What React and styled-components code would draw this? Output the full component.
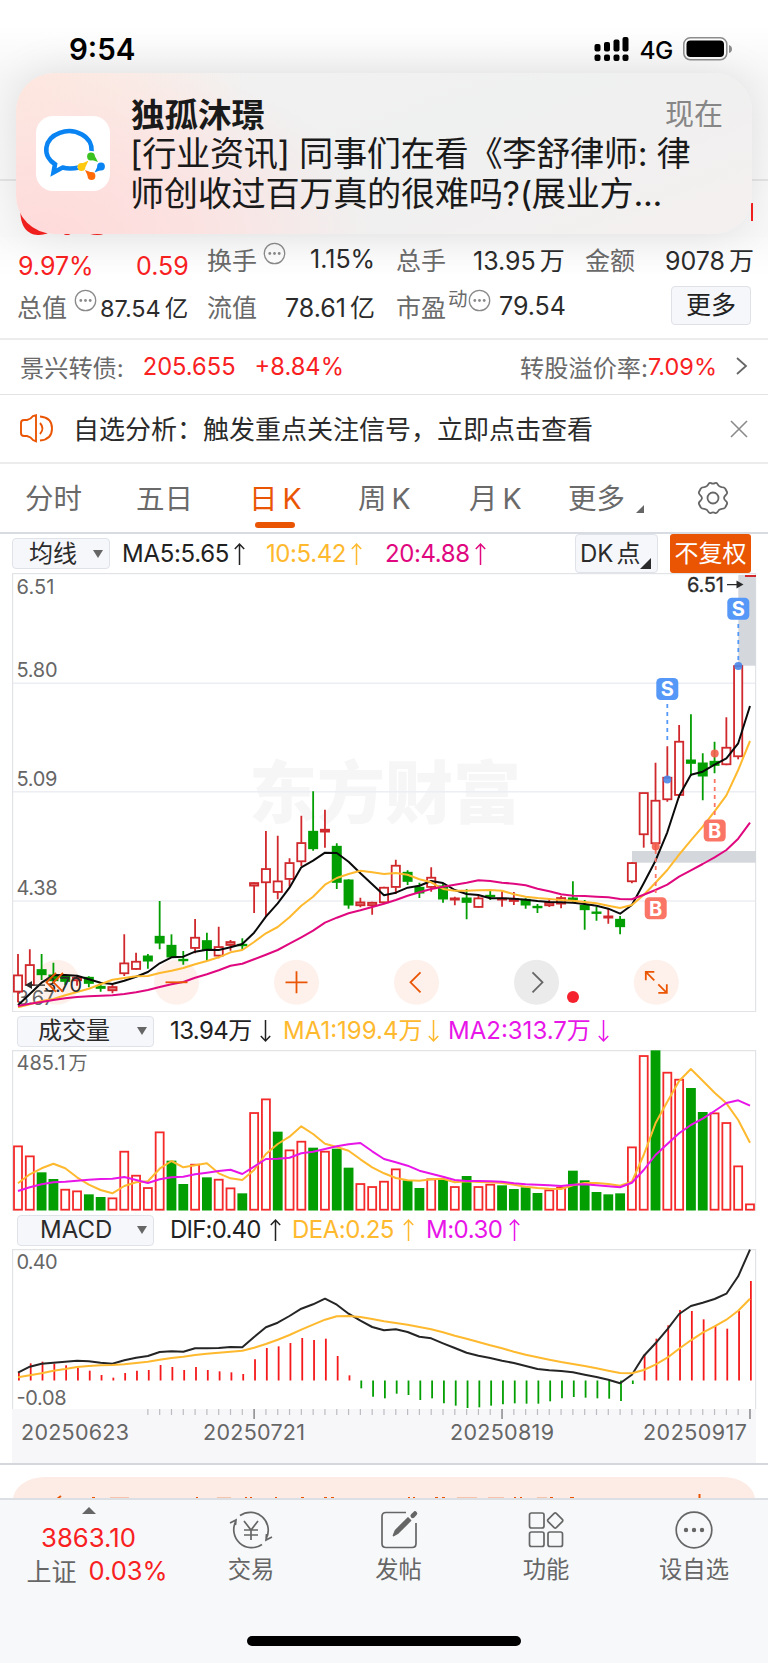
import React from "react";
import styled, { createGlobalStyle } from "styled-components";

const Global = createGlobalStyle`
  * { box-sizing: border-box; }
  body { margin: 0; background: #fff; }
`;

const FONT = `Inter, "Noto Sans CJK SC", sans-serif`;
const RED = "#f8211f";
const GREEN = "#029e02";
const CANDLE = "#d0282c";
const ORANGE = "#ea5504";
const YELLOW = "#ffb92e";
const PINK = "#e0087f";
const PURPLE = "#e815e8";

const Screen = styled.div`
  position: relative;
  width: 768px;
  height: 1663px;
  overflow: hidden;
  background: #fff;
  font-family: ${FONT};
  color: #2b2b2b;
  display: flex;
  flex-direction: column;
`;

/* ---------- status bar and header ---------- */
const Header = styled.header`
  height: 237px;
  flex: none;
  display: flex;
  flex-direction: column;
  background: linear-gradient(#fff 0, #fff 24px, #fafafa 55px, #f7f7f7 80px, #fafafa 200px, #f8f8f8 237px);
`;
const StatusBar = styled.div`
  height: 73px;
  padding: 25px 36px 0 69px;
  display: flex;
  align-items: center;
  color: #000;
`;
const Clock = styled.span`
  flex: 1;
  font-size: 29.5px;
  font-weight: 600;
  line-height: 47px;
`;
const Network = styled.span`
  font-size: 24.5px;
  font-weight: 500;
  margin: 2px 10px 0 9px;
  letter-spacing: -0.4px;
`;
const TitleArea = styled.div`
  height: 108px;
  border-bottom: 2px solid #e6e6e7;
`;
const PriceStrip = styled.div`
  height: 56px;
  padding-left: 17px;
  padding-right: 15px;
  display: flex;
  justify-content: space-between;
  overflow: hidden;
`;
const BigPrice = styled.span`
  color: ${RED};
  font-size: 68px;
  line-height: 56px;
  font-weight: 600;
  letter-spacing: -2px;
`;
const PriceMark = styled.span`
  width: 2px;
  height: 18px;
  margin-top: 22px;
  background: ${RED};
`;

const Notification = styled.section`
  position: absolute;
  left: 16px;
  top: 73px;
  width: 736px;
  height: 161px;
  border-radius: 38px;
  padding: 0 29px 0 20px;
  display: flex;
  align-items: center;
  background:
    radial-gradient(ellipse 330px 190px at 30px 165px, #ffdada 0, rgba(255, 222, 220, 0.75) 45%, rgba(255, 230, 228, 0) 100%),
    radial-gradient(ellipse 230px 150px at 0 10px, #fde9df 0, rgba(252, 235, 228, 0.7) 50%, rgba(250, 240, 236, 0) 100%),
    linear-gradient(160deg, #f3f2f1 0%, #eff0f0 50%, #f4f0ef 100%);
  box-shadow: 0 0 44px rgba(0, 0, 0, 0.11);
`;
const AppIcon = styled.div`
  width: 74px;
  height: 75px;
  flex: none;
  margin-top: -1px;
  border-radius: 17px;
  background: #fff;
`;
const Message = styled.div`
  flex: 1;
  margin-left: 20px;
  color: #1a1a1a;
`;
const MessageHead = styled.div`
  display: flex;
  justify-content: space-between;
  align-items: center;
  height: 40px;
  padding-bottom: 3px;
`;
const Sender = styled.span`
  font-size: 33.5px;
  font-weight: 700;
  padding-left: 1px;
`;
const When = styled.span`
  font-size: 29px;
  color: #878686;
`;
const MessageLine = styled.div`
  font-size: 34.2px;
  line-height: 40px;
  height: 40px;
  white-space: nowrap;
  letter-spacing: -0.32px;
`;

/* ---------- quote ---------- */
const Quote = styled.section`
  height: 103px;
  flex: none;
  border-bottom: 2px solid #ececed;
  background: linear-gradient(#f9f9f9, #fff 40px);
`;
const QuoteRow = styled.div`
  display: grid;
  grid-template-columns: ${(p) => p.$cols};
  padding-left: 18px;
  height: ${(p) => p.$h}px;
  padding-bottom: ${(p) => p.$pb}px;
  align-items: center;
  white-space: nowrap;
`;
const Label = styled.span`
  display: flex;
  align-items: center;
  gap: ${(p) => p.$gap || 0}px;
  font-size: 25px;
  color: #6a6a6a;
  margin-left: -1px;
`;
const Sup = styled.span`
  font-size: 19.5px;
  margin: -16px -1px 0 1px;
`;
const Num = styled.span`
  font-size: ${(p) => p.$size || 25}px;
  color: ${(p) => p.$color || "#2b2b2b"};
  margin-top: ${(p) => p.$dy || 0}px;
`;
const Unit = styled.span`
  margin-left: ${(p) => p.$gap || 4}px;
`;
const MoreButton = styled.button`
  width: 80px;
  height: 39px;
  padding: 0;
  border: 1.5px solid #dfe1e7;
  border-radius: 4px;
  background: #f6f7fa;
  font: 25px ${FONT};
  line-height: 33px;
  color: #222;
`;

/* ---------- bond and notice ---------- */
const BondRow = styled.section`
  height: 55px;
  flex: none;
  padding: 0 20px 2px;
  display: flex;
  align-items: center;
  border-bottom: 1.5px solid #e2e4e8;
  white-space: nowrap;
  font-size: 24.2px;
  color: #6a6a6a;
`;
const Spacer = styled.span`
  flex: ${(p) => (p.$w ? "none" : 1)};
  width: ${(p) => p.$w || 0}px;
`;
const Notice = styled.section`
  height: 69px;
  flex: none;
  padding: 0 20px;
  display: flex;
  align-items: center;
  border-bottom: 2px solid #ececed;
  font-size: 26px;
`;
const NoticeText = styled.span`
  flex: 1;
  margin-left: 20px;
  padding-bottom: 3px;
`;

/* ---------- tabs ---------- */
const Tabs = styled.nav`
  height: 70px;
  flex: none;
  display: grid;
  grid-template-columns: 111px 113px 109px 111px 99px 128px 1fr;
  padding-left: 25px;
  border-bottom: 2px solid #d8dbe2;
`;
const Tab = styled.div`
  display: flex;
  flex-direction: column;
  width: max-content;
  align-items: center;
  font-size: 28.5px;
  line-height: 41px;
  padding-top: 14px;
  color: ${(p) => (p.$on ? ORANGE : "#6a6a6a")};
`;
const TabText = styled.span`
  display: flex;
  align-items: flex-end;
  gap: 5px;
`;
const TabLine = styled.i`
  width: 40px;
  height: 6px;
  border-radius: 3px;
  margin: 3px 0 0 0;
  background: ${ORANGE};
`;
const Gear = styled.svg`
  margin-top: 3px;
`;
const Corner = styled.i`
  border-left: ${(p) => p.$s}px solid transparent;
  border-bottom: ${(p) => p.$s}px solid ${(p) => p.$color};
  margin: ${(p) => p.$m};
`;

/* ---------- indicator bars ---------- */
const IndicatorBar = styled.div`
  height: ${(p) => p.$h}px;
  flex: none;
  padding: 0 17px 0 ${(p) => p.$pl}px;
  display: flex;
  align-items: center;
  white-space: nowrap;
`;
const Select = styled.button`
  width: ${(p) => p.$w}px;
  height: 31px;
  padding: 0 6px 0 ${(p) => p.$pl}px;
  display: flex;
  align-items: center;
  justify-content: space-between;
  border: 1.5px solid #dfe2e8;
  border-radius: 4px;
  background: #f6f7fa;
  font: 24px ${FONT};
  line-height: 28px;
  color: #2b2b2b;
`;
const Caret = styled.i`
  border: 5px solid transparent;
  border-top: 8px solid #666;
  border-bottom: 0;
`;
const Value = styled.span`
  display: flex;
  align-items: center;
  gap: ${(p) => p.$gap || 4}px;
  width: ${(p) => p.$w}px;
  font-size: 24px;
  line-height: 30px;
  color: ${(p) => p.$color || "#222"};
  letter-spacing: ${(p) => p.$ls || 0}px;
`;
const DKButton = styled.button`
  width: 83px;
  height: 39px;
  margin-right: 12px;
  padding: 0 5px 0 4px;
  display: flex;
  align-items: flex-end;
  border: 1.5px solid #dfe2e8;
  border-radius: 4px;
  background: #f6f7fa;
  font: 24px ${FONT};
  line-height: 36px;
  color: #2b2b2b;
  white-space: nowrap;
`;
const AdjustButton = styled.button`
  width: 81px;
  height: 39px;
  padding: 0;
  border: 0;
  border-radius: 3px;
  background: ${ORANGE};
  color: #fff;
  font: 24px ${FONT};
  line-height: 37px;
`;
const Chart = styled.svg`
  display: block;
  flex: none;
  margin-left: 12px;
  font-family: ${FONT};
`;

/* ---------- lower part ---------- */
const Promo = styled.section`
  height: 35px;
  flex: none;
  padding: 12px 13px 0;
  border-top: 2px solid #d5d7dc;
`;
const PromoCard = styled.div`
  height: 23px;
  border-radius: 32px 32px 0 0 / 23px 23px 0 0;
  background: #fdece5;
`;
const Footer = styled.footer`
  flex: 1;
  border-top: 2px solid #dcdfe3;
  background: #f6f8fa;
  display: flex;
  flex-direction: column;
  align-items: center;
`;
const FooterRow = styled.div`
  width: 768px;
  height: 136px;
  display: grid;
  grid-template-columns: 177px 148px 147px 148px 148px;
`;
const IndexCell = styled.div`
  display: flex;
  flex-direction: column;
  align-items: center;
  padding-top: 7px;
  white-space: nowrap;
`;
const UpMark = styled.i`
  border: 7px solid transparent;
  border-top: 0;
  border-bottom: 7px solid #666;
`;
const IndexLine = styled.div`
  display: flex;
  gap: 12px;
  align-items: center;
  height: 34px;
  margin-top: ${(p) => p.$mt}px;
  margin-left: ${(p) => p.$ml}px;
  font-size: 25px;
  color: #666;
`;
const Action = styled.div`
  display: flex;
  flex-direction: column;
  align-items: center;
  padding-top: 7px;
  font-size: 23.3px;
  line-height: 34px;
  color: #666;
`;
const HomeBar = styled.div`
  width: 274px;
  height: 10px;
  border-radius: 5px;
  background: #000;
`;

/* ---------- data: 63 trading days ---------- */
const X = (i) => 18 + i * 11.806;
const candles = `r 1152 1215 1266 1297|r 1138 1184 1246 1250|g 1152 1199 1214 1230|g 1178 1215 1232 1240|g 1215 1217 1234 1246|r 1217 1222 1232 1247|g 1219 1222 1240 1252|g 1240 1249 1255 1265|r 1245 1250 1262 1270|r 1093 1179 1211 1218|r 1148 1174 1198 1200|g 1152 1158 1173 1196|g 993 1099 1119 1138|g 1093 1126 1161 1161|g 1143 1168 1172 1184|r 1047 1102 1135 1150|g 1088 1112 1139 1172|r 1070 1130 1158 1165|r 1110 1115 1126 1142|g 1105 1123 1127 1140|r 937 938 948 1029|r 783 896 938 1040|r 797 933 967 988|r 865 878 928 950|r 737 818 875 888|g 664 784 836 842|r 719 778 786 833|g 820 829 937 957|g 928 930 1005 1016|r 983 996 1007 1012|r 995 997 1007 1034|r 950 952 998 1000|r 869 886 952 972|g 901 907 934 945|g 938 952 969 984|r 892 922 952 965|g 940 948 987 998|r 980 984 990 1006|g 957 984 997 1048|r 978 984 1012 1014|g 963 976 980 990|r 964 985 990 1010|r 966 986 994 1005|g 985 988 1005 1016|g 1002 1009 1013 1029|r 984 997 1007 1011|r 977 983 1002 1015|g 934 984 989 997|g 990 1006 1019 1079|g 1010 1026 1030 1052|r 1015 1038 1044 1061|g 1038 1048 1070 1093|r 876 878 935 940|r 668 668 794 833|r 578 691 821 840|r 529 622 689 695|r 465 514 676 684|g 433 570 580 618|g 550 579 618 691|g 515 574 586 610|r 442 532 584 586|r 287 287 560 568`
  .split("|")
  .map((s) => {
    const [c, ...v] = s.split(" ");
    return [c, ...v.map((n) => 570 + n / 3)];
  });
const ma5 = [1306,1272,1238,1216,1215,1217,1228,1238,1242,1232,1220,1206,1180,1162,1160,1145,1139,1140,1132,1122,1088,1040,1000,953,892,872,848,849,875,910,943,976,968,953,947,933,939,960,972,975,985,985,986,989,993,996,997,998,1002,1007,1016,1031,1005,940,872,787,678,614,605,584,565,520,408];
const ma10 = [1312,1303,1293,1287,1276,1266,1256,1243,1229,1224,1219,1218,1209,1202,1194,1183,1173,1162,1147,1140,1116,1090,1071,1042,1007,980,944,924,912,902,907,912,909,914,928,937,957,962,962,961,960,962,973,980,984,987,990,992,996,1000,1007,1014,1005,975,938,900,854,811,770,724,676,600,513];
const ma20 = [1308,1301,1296,1290,1285,1281,1279,1277,1276,1272,1267,1260,1251,1243,1236,1223,1213,1201,1187,1181,1168,1154,1140,1121,1102,1082,1058,1043,1030,1021,1011,1001,990,977,967,957,950,944,938,931,933,938,941,946,956,964,973,977,978,980,982,987,988,974,960,944,920,901,882,862,840,806,758];
const volumes = "r407 r437 g487 g507 r537 r542 g553 g561 r563 r423 r495 r532 r365 g452 g522 r462 g502 r507 r533 g550 r307 r266 g365 r419 r393 g413 r423 g416 g473 r520 r529 r513 r476 g511 g534 r506 g508 r529 g498 r529 r522 g526 g537 g532 g549 r539 r531 g482 g511 g546 g553 g550 r410 r136 g121 r186 r207 g234 g306 r308 r337 r467 r581".split(" ");
const vma1 = [520,493,475,461,475,502,524,540,550,528,517,514,476,453,472,466,460,490,505,510,480,432,402,380,349,372,401,411,422,448,472,490,504,511,512,508,506,517,514,516,517,519,524,530,534,536,537,526,519,519,522,527,515,435,340,275,213,177,212,248,280,330,398];
const vma2 = [543,532,523,517,515,512,509,507,506,501,510,519,508,502,500,493,488,483,479,492,470,447,446,443,430,425,417,409,403,399,424,447,457,467,482,491,500,510,513,513,514,515,520,523,524,526,528,524,523,526,529,532,518,480,435,402,370,345,326,303,279,271,287];
const macd = [488,460,455,461,466,474,482,495,503,489,482,480,465,471,480,471,480,484,487,492,448,414,409,399,384,390,386,438,496,535,560,565,551,555,570,565,580,587,594,592,587,583,580,581,581,574,565,561,563,565,566,573,522,432,386,346,300,303,328,348,356,302,213];
const dif = [488,470,461,458,455,452,454,458,461,451,443,438,426,424,425,415,415,414,411,412,381,352,338,318,296,283,266,284,311,332,351,361,358,366,380,385,400,414,428,437,444,452,459,468,477,481,483,487,494,501,509,520,494,438,400,358,312,288,278,267,251,199,119];
const dea = [502,496,490,482,477,471,468,466,465,463,459,455,449,444,440,435,431,428,425,422,413,402,389,375,359,344,329,319,318,321,327,334,339,344,351,358,367,377,386,396,406,415,425,434,442,449,456,462,468,475,482,489,490,480,464,443,416,391,368,349,329,302,266];

const Line = ({ data, top, color }) => (
  <polyline
    points={data.map((v, i) => `${X(i).toFixed(1)},${(top + v / 3).toFixed(1)}`).join(" ")}
    fill="none"
    stroke={color}
    strokeWidth="2"
    strokeLinejoin="round"
  />
);

const Arrow = ({ down }) => (
  <svg width="11" height="24" viewBox="0 0 11 24" fill="none" stroke="currentColor" strokeWidth="1.5">
    <path d={down ? "M5.5 1v21M.8 17l4.700 5 4.700-5" : "M5.500 23V2M.8 7l4.700-5 4.700 5"} />
  </svg>
);
const InfoIcon = styled.svg`
  margin-top: -11px;
`;
const Dots = () => (
  <InfoIcon width="23" height="23" viewBox="0 0 23 23">
    <circle cx="11.5" cy="11.5" r="10.2" fill="none" stroke="#8a8a8a" strokeWidth="1.3" />
    {[6.8, 11.5, 16.2].map((x) => <circle key={x} cx={x} cy="11.5" r="1.4" fill="#8a8a8a" />)}
  </InfoIcon>
);

const Marker = ({ x, y, t, from, to, dot }) => {
  const c = t === "S" ? "#5698f7" : "#fb7567";
  return (
    <g>
      <line x1={x} x2={x} y1={from} y2={to} stroke={c} strokeWidth="1.8" strokeDasharray="4 4" />
      <circle cx={x} cy={dot} r="4" fill={t === "S" ? "#4a86e8" : "#f4604e"} opacity=".9" />
      <rect x={x - 11} y={y - 11} width="22" height="22" rx="4.5" fill={c} />
      <text x={x} y={y + 7.2} textAnchor="middle" fontSize="20" fontWeight="700" fill="#fff">{t}</text>
    </g>
  );
};

const ChartButton = ({ x, gray, children }) => (
  <g transform={`translate(${x} 982.3)`} fill="none" stroke={gray ? "#666" : ORANGE} strokeWidth="1.8">
    {children}
  </g>
);

const PriceChart = () => (
  <Chart width="745" height="439" viewBox="12 573 745 439">
    <text x="249" y="818" fontSize="68" fontWeight="900" fill="#f6f6f7" textLength="272">东方财富</text>
    <g stroke="#eceef3" strokeWidth="1.4">
      <path d="M12 683.3H756M12 791.8H756M12 901H756" />
    </g>
    <rect x="12.6" y="573.6" width="743" height="438" fill="none" stroke="#e1e3e7" strokeWidth="1.2" />
    <rect x="738.3" y="575" width="17.5" height="90.7" fill="#d4d7dc" />
    <rect x="632" y="851" width="124" height="11.7" fill="#d4d7dc" />
    {[57, 176.5, 296.5, 416.5, 536.5, 656.3].map((x) => (
      <circle key={x} cx={x} cy="982.3" r="22.5" fill={x === 536.5 ? "#ebebec" : "#fef1eb"} />
    ))}
    <g fontSize="20" fill="#666">
      <text x="16.5" y="594" textLength="38">6.51</text>
      <text x="16.5" y="676.5" textLength="41">5.80</text>
      <text x="16.5" y="785.5" textLength="41">5.09</text>
      <text x="16.5" y="895" textLength="41">4.38</text>
      <text x="16.5" y="1005" textLength="38">3.67</text>
    </g>
    {candles.map(([c, hi, top, bot, lo], i) => {
      const col = c === "r" ? CANDLE : GREEN;
      return (
        <g key={i} stroke={col} strokeWidth="1.8">
          <path d={`M${X(i)} ${hi}V${top}M${X(i)} ${bot}V${lo}`} />
          <rect
            x={X(i) - 4.1}
            y={top + 0.4}
            width="8.2"
            height={Math.max(bot - top - 0.8, 0.6)}
            fill={c === "g" ? GREEN : bot - top < 5 ? "#e07f80" : "#fff"}
          />
        </g>
      );
    })}
    <path d="M745 576h11" stroke={CANDLE} strokeWidth="2" />
    <Line data={ma5} top={570} color="#0a0a0a" />
    <Line data={ma10} top={570} color={YELLOW} />
    <Line data={ma20} top={570} color={PINK} />
    <Marker t="S" x={738.3} y={608.7} from={624} to={662} dot={666} />
    <Marker t="S" x={667.3} y={689} from={704} to={742} dot={779.5} />
    <Marker t="B" x={714.7} y={830.5} from={779} to={816} dot={753.6} />
    <Marker t="B" x={655.7} y={908.3} from={850} to={893} dot={846.5} />
    <g fontSize="20" fill="#2b2b2b">
      <text x="687" y="592" textLength="37" stroke="#2b2b2b" strokeWidth=".3">6.51</text>
      <text x="44" y="992" textLength="38">3.70</text>
      <path d="M727 583.900h9.500v-3.500l7 4-7 4v-3.200h-9.500zM45 984.400H32v-3.400l-7 4 7 4v-3.200h13z" />
    </g>
    <ChartButton x={57}><path d="M-1-9.500-10.500 0-1 9.500M6-9.500-3.500 0 6 9.500" /></ChartButton>
    <ChartButton x={176.5}><path d="M-11 0H11" /></ChartButton>
    <ChartButton x={296.5}><path d="M-11 0H11M0-11V11" /></ChartButton>
    <ChartButton x={416.5}><path d="M4-10-6 0 4 10" /></ChartButton>
    <ChartButton x={536.5} gray><path d="M-4-10 6 0-4 10" /></ChartButton>
    <ChartButton x={656.3}>
      <path d="M-2-10.500h-8.500v8.500M-10-10-2-2M2 10.500h8.500V2M10 10 2 2" />
    </ChartButton>
    <circle cx="573" cy="997" r="6" fill="#f5222d" />
  </Chart>
);

const VolumeChart = () => (
  <Chart width="745" height="161" viewBox="12 1050 745 161">
    <path d="M12.600 1211V1050.600H755.600V1211" fill="none" stroke="#e1e3e7" strokeWidth="1.200" />
    <text x="16.500" y="1070" fontSize="20" fill="#666">485.1<tspan dx="3" fontSize="19">万</tspan></text>
    {volumes.map((s, i) => {
      const y = 1010 + Number(s.slice(1)) / 3;
      const red = s[0] === "r";
      return red ? (
        <rect key={i} x={X(i) - 4} y={y + 0.7} width="8" height={1209.7 - y - 0.7} fill="#fff" stroke="#f42a2a" strokeWidth="1.800" />
      ) : (
        <rect key={i} x={X(i) - 4.9} y={y} width="9.800" height={1210.5 - y} fill={GREEN} />
      );
    })}
    <Line data={vma1} top={1010} color={YELLOW} />
    <Line data={vma2} top={1010} color={PURPLE} />
  </Chart>
);

const MacdChart = () => (
  <Chart width="745" height="214" viewBox="12 1249 745 214">
    <path d="M12.600 1409V1249.600H755.600V1409" fill="none" stroke="#e1e3e7" strokeWidth="1.200" />
    <rect x="12" y="1409" width="744" height="54" fill="#f7f7fa" />
    {macd.map((v, i) => (
      <path key={i} d={`M${X(i) + 0.9} ${1210 + v / 3}V1380.500`} stroke={v > 511 ? GREEN : "#f5191b"} strokeWidth="1.800" />
    ))}
    <Line data={dif} top={1210} color="#252525" />
    <Line data={dea} top={1210} color={YELLOW} />
    {Array.from({ length: 52 }, (_, k) => k + 11).map((i) => {
      const big = i === 20 || i === 41 || i === 62;
      return <path key={i} d={`M${X(i)} 1409v${big ? 10 : 6}`} stroke={big ? "#8f8f93" : "#bdbdc1"} strokeWidth={big ? 1.6 : 1.2} />;
    })}
    <g fontSize="20" fill="#666">
      <text x="16.500" y="1268.500" textLength="41">0.40</text>
      <text x="16.500" y="1404.500" textLength="50">-0.08</text>
    </g>
    <g fontSize="21.500" fill="#666">
      <text x="21" y="1439.500" textLength="108">20250623</text>
      <text x="203" y="1439.500" textLength="102">20250721</text>
      <text x="450" y="1439.500" textLength="104">20250819</text>
      <text x="643" y="1439.500" textLength="104">20250917</text>
    </g>
  </Chart>
);

const icon = { width: 46, height: 46, viewBox: "0 0 46 46", fill: "none", stroke: "#666", strokeWidth: 1.7 };

export default function App() {
  return (
    <Screen>
      <Global />
      <Header>
        <StatusBar>
          <Clock>9:54</Clock>
          <svg width="36" height="26" viewBox="0 0 36 26">
            {[[0, 8], [9.5, 6], [19, 3.5], [28, 1]].map(([x, y]) => (
              <g key={x}>
                <rect x={x + 0.5} y={y} width="6" height={15.5 - y} rx="2" />
                <rect x={x + 0.5} y="18.500" width="6" height="6.500" rx="2" />
              </g>
            ))}
          </svg>
          <Network>4G</Network>
          <svg width="49" height="24" viewBox="0 0 49 24">
            <rect x=".8" y=".8" width="43" height="22" rx="6.500" fill="none" stroke="#8d8d8d" strokeWidth="1.500" />
            <rect x="3.500" y="3.500" width="37.500" height="16.500" rx="4" />
            <path d="M46 8q3 1 3 4t-3 4z" fill="#8d8d8d" />
          </svg>
        </StatusBar>
        <TitleArea />
        <PriceStrip>
          <BigPrice>6.51</BigPrice>
          <PriceMark />
        </PriceStrip>
      </Header>

      <Quote>
        <QuoteRow $h={48} $pb={5} $cols="118px 72px 102px 87px 76px 113px 79px 1fr">
          <Num $color={RED} $dy={14}>9.97%</Num>
          <Num $color={RED} $dy={14}>0.59</Num>
          <Label $gap={6}>换手<Dots /></Label>
          <Num>1.15%</Num>
          <Label>总手</Label>
          <Num>13.95<Unit>万</Unit></Num>
          <Label>金额</Label>
          <Num>9078<Unit>万</Unit></Num>
        </QuoteRow>
        <QuoteRow $h={44} $pb={3} $cols="82px 108px 77px 112px 102px 172px 1fr">
          <Label $gap={7}>总值<Dots /></Label>
          <Num $dy={3} $size={23.5}>87.54<Unit>亿</Unit></Num>
          <Label>流值</Label>
          <Num>78.61<Unit>亿</Unit></Num>
          <Label $gap={1}>市盈<Sup>动</Sup><Dots /></Label>
          <Num>79.54</Num>
          <MoreButton>更多</MoreButton>
        </QuoteRow>
      </Quote>

      <BondRow>
        <span>景兴转债:</span>
        <Spacer $w={19} />
        <Num $color={RED} $size={23.7}>205.655</Num>
        <Spacer $w={19} />
        <Num $color={RED} $size={23.7}>+8.84%</Num>
        <Spacer />
        <span>转股溢价率:</span>
        <Num $color={RED} $size={23.5}>7.09%</Num>
        <Spacer $w={18} />
        <svg width="13" height="20" viewBox="0 0 13 20" fill="none" stroke="#666" strokeWidth="1.800"><path d="M2 2l9 8-9 8" /></svg>
      </BondRow>

      <Notice>
        <svg width="33" height="29" viewBox="0 0 33 29" fill="none" stroke={ORANGE} strokeWidth="1.900">
          <path d="M1 9q0-3 3-3h3q4-1 6-4l3-.7v26L13 26q-2-3-6-4H4q-3 0-3-3z" />
          <path d="M20 9q5 5.500 0 11M20 2.500q12 1 12 12t-12 12" />
        </svg>
        <NoticeText>自选分析：触发重点关注信号，立即点击查看</NoticeText>
        <svg width="18" height="18" viewBox="0 0 18 18" stroke="#8a8a8a" strokeWidth="1.600"><path d="M1 1l16 16M17 1L1 17" /></svg>
      </Notice>

      <Tabs>
        <Tab><TabText>分时</TabText></Tab>
        <Tab><TabText>五日</TabText></Tab>
        <Tab $on><TabText>日<span>K</span></TabText><TabLine /></Tab>
        <Tab><TabText>周<span>K</span></TabText></Tab>
        <Tab><TabText>月<span>K</span></TabText></Tab>
        <Tab><TabText>更多<Corner $s={8} $color="#666" $m="0 0 6px 6px" /></TabText></Tab>
        <Tab>
          <Gear width="34" height="34" viewBox="0 0 34 34" fill="none" stroke="#666" strokeWidth="1.800">
            <path d="M12.500 3q1-1.500 2.500-.9 2 1 4 0 1.500-.6 2.500.9 1.200 2.800 4.200 3.200 2.500 0 3.500 1.300l1.800 3.500q.6 1.400-1 2.800-2 1.800-2 3.200t2 3.200q1.600 1.400 1 2.800l-1.800 3.500q-1 1.300-3.500 1.300-3 .4-4.200 3.200-1 1.500-2.500.9-2-1-4 0-1.500.6-2.500-.9-1.200-2.800-4.200-3.200-2.500 0-3.500-1.300L3 23q-.6-1.400 1-2.800 2-1.800 2-3.200t-2-3.200Q2.400 12.400 3 11l1.800-3.500q1-1.300 3.500-1.300 3-.4 4.200-3.200z" />
            <circle cx="17" cy="17" r="5.500" />
          </Gear>
        </Tab>
      </Tabs>

      <IndicatorBar $h={39} $pl={12}>
        <Select $w={98} $pl={16}>均线<Caret /></Select>
        <Spacer $w={12} />
        <Value $w={144} $ls={-0.3} $gap={5}>MA5:5.65<Arrow /></Value>
        <Value $w={119} $ls={-0.4} $gap={5} $color={YELLOW}>10:5.42<Arrow /></Value>
        <Value $w={120} $ls={-0.4} $gap={5} $color={PINK}>20:4.88<Arrow /></Value>
        <Spacer />
        <DKButton>DK<Unit $gap={3}>点</Unit><Corner $s={11} $color="#2b2b2b" $m="0 -8px 3px 0" /></DKButton>
        <AdjustButton>不复权</AdjustButton>
      </IndicatorBar>
      <PriceChart />
      <IndicatorBar $h={38} $pl={17}>
        <Select $w={137} $pl={20}>成交量<Caret /></Select>
        <Spacer $w={16} />
        <Value $w={113} $ls={-0.6} $gap={8}>13.94万<Arrow down /></Value>
        <Value $w={165} $gap={6} $color={YELLOW}>MA1:199.4万<Arrow down /></Value>
        <Value $gap={7} $color={PURPLE}>MA2:313.7万<Arrow down /></Value>
      </IndicatorBar>
      <VolumeChart />
      <IndicatorBar $h={38} $pl={17}>
        <Select $w={137} $pl={22}>MACD<Caret /></Select>
        <Spacer $w={16} />
        <Value $w={122} $ls={-0.8} $gap={9}>DIF:0.40<Arrow /></Value>
        <Value $w={134} $ls={-0.5} $gap={9} $color={YELLOW}>DEA:0.25<Arrow /></Value>
        <Value $ls={-0.5} $gap={7} $color={PURPLE}>M:0.30<Arrow /></Value>
      </IndicatorBar>
      <MacdChart />

      <Promo>
        <PromoCard>
          <svg width="742" height="23" viewBox="13 1476 742 23" stroke={ORANGE} strokeWidth="2">
            <path d="M57 1498l4-3M92 1497h3M196 1497h2M245 1497h2M250 1497h2M275 1497h2M301 1497h3M324 1497h3M331 1497h3M408 1497h2M413 1497h2M435 1497h3M442 1497h3M514 1497h2M520 1497h2M570 1497h4M550 1497h3M699.500 1493v6" />
            <path opacity=".5" d="M110 1497.500h19M217 1497.500h14M457 1497.500h20M488 1497.500h16M537 1497.500h10" />
          </svg>
        </PromoCard>
      </Promo>

      <Footer>
        <FooterRow>
          <IndexCell>
            <UpMark />
            <IndexLine $mt={6} $ml={0}><Num $color={RED} $size={25.7}>3863.10</Num></IndexLine>
            <IndexLine $mt={-1} $ml={17}>上证<Num $color={RED} $size={25.5}>0.03%</Num></IndexLine>
          </IndexCell>
          <Action>
            <svg {...icon}>
              <path d="M12 8.500A18 18 0 0 1 38 32M34 37.500A18 18 0 0 1 8 14M2 16l6-3-.5 5M44 30l-6 3 .5-6" />
              <path d="M16 14l7 9 7-9M23 23v10M16 23h14M16 28h14" />
            </svg>
            交易
          </Action>
          <Action>
            <svg {...icon}>
              <path d="M30 5.500H10q-4 0-4 4v27q0 4 4 4h26q4 0 4-4V16" />
              <path d="M17.500 28.500l2-5L32 11l2.500 2.500L22 26z" fill="#666" strokeLinejoin="round" />
              <path d="M36.700 8.800l2.300-2.300" strokeWidth="4.500" strokeLinecap="round" />
            </svg>
            发帖
          </Action>
          <Action>
            <svg {...icon}>
              <rect x="6.500" y="6" width="14.500" height="15" rx="2" />
              <rect x="6.500" y="25" width="14.500" height="14.500" rx="2" />
              <rect x="25" y="25" width="14.500" height="14.500" rx="2" />
              <rect x="26.500" y="7.800" width="11.500" height="11.500" rx="1.500" transform="rotate(45 32.250 13.500)" />
            </svg>
            功能
          </Action>
          <Action>
            <svg {...icon}>
              <circle cx="23" cy="23" r="17.800" />
              {[15, 23, 31].map((x) => <circle key={x} cx={x} cy="23" r="2.200" fill="#666" stroke="none" />)}
            </svg>
            设自选
          </Action>
        </FooterRow>
        <HomeBar />
      </Footer>

      <Notification>
        <AppIcon>
          <svg width="74" height="75" viewBox="0 0 74 75">
            <path d="M55.600 35A22.700 18.500 0 1 0 19 48.300L17.500 56.500 26.500 51.600Q34 53.500 43 51.500" fill="none" stroke="#0a84f2" strokeWidth="4.600" />
            <path d="M55 41L46 51 56 60 65 50z" fill="#fff" stroke="#fff" strokeWidth="7" />
            <circle cx="55" cy="40.500" r="3.900" fill="#3cc220" />
            <circle cx="45.500" cy="51" r="3.900" fill="#ffc90e" />
            <circle cx="55.500" cy="60" r="3.900" fill="#ff6a0a" />
            <circle cx="65" cy="50.500" r="3.900" fill="#0a84f2" />
            <path d="M58.500 39.500L62 46l-6-2z" fill="#3cc220" />
            <path d="M46 47.500l6.500-3-3 6.500z" fill="#ffc90e" />
            <path d="M52 60.500l-3-6.500 6.500 2.500z" fill="#ff6a0a" />
            <path d="M65 54l-6.500 2.500 3-6z" fill="#0a84f2" />
          </svg>
        </AppIcon>
        <Message>
          <MessageHead><Sender>独孤沐璟</Sender><When>现在</When></MessageHead>
          <MessageLine>[行业资讯] 同事们在看《李舒律师: 律</MessageLine>
          <MessageLine>师创收过百万真的很难吗?(展业方...</MessageLine>
        </Message>
      </Notification>
    </Screen>
  );
}
